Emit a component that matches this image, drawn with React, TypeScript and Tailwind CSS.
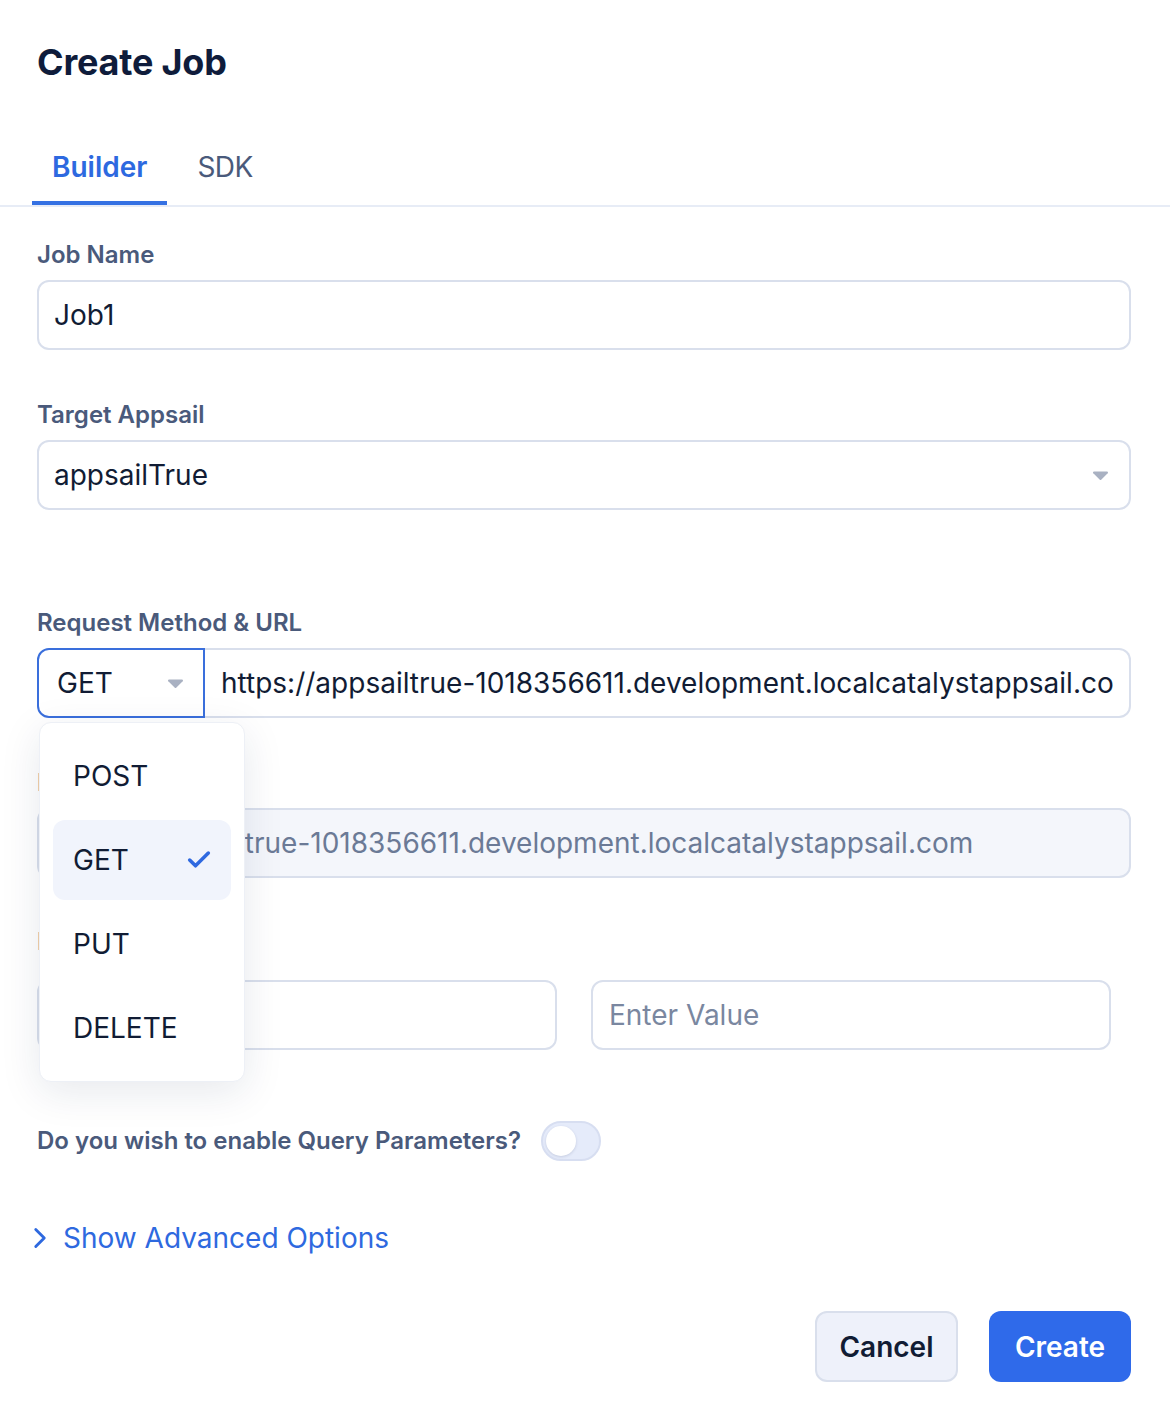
import React from "react";
import { Check, ChevronRight } from "lucide-react";

const font = { fontFamily: "Inter, 'Noto Sans', sans-serif" };

const Caret = () => (
    <svg width="17" height="11" viewBox="0 0 17 11" className="shrink-0">
        <path d="M2 1.5h13c.9 0 1.3 1 .7 1.7l-6.5 6.6c-.4.4-1 .4-1.4 0L1.3 3.2C.7 2.5 1.1 1.5 2 1.5z" fill="#a9b1c2" />
    </svg>
);

const Label = ({ children }: { children: React.ReactNode }) => (
    <div className="text-[24px] leading-[28px] font-semibold text-[#4a5a7b]">{children}</div>
);

const methods = ["POST", "GET", "PUT", "DELETE"];

export default function App() {
    return (
        <div style={font} className="w-[1170px] min-h-[1416px] bg-white text-[#111c34]">
            <div className="pl-[37px] pt-[40px]">
                <h1 className="text-[36px] leading-[44px] font-bold text-[#0f1c3b] tracking-[-0.2px]">Create Job</h1>
            </div>

            <nav className="mt-[66px] flex gap-[10px] pl-[32px] border-b-2 border-[#e7ecf6]">
                <div className="flex flex-col px-[20px]">
                    <span className="text-[28px] leading-[34px] font-semibold text-[#2d69e0]">Builder</span>
                    <div className="mt-[17px] h-[4px] bg-[#3571e3] -mx-[20px]" />
                </div>
                <div className="flex flex-col px-[20px]">
                    <span className="text-[28px] leading-[34px] text-[#4a5a7b] tracking-[-0.5px]">SDK</span>
                    <div className="mt-[17px] h-[4px]" />
                </div>
            </nav>

            <div className="pl-[37px] pr-[39px]">
                <div className="mt-[34px]">
                    <Label>Job Name</Label>
                    <div className="mt-[11px] h-[70px] rounded-[12px] border-2 border-[#d9dfec] flex items-center px-[15px] text-[28px]">
                        Job1
                    </div>
                </div>

                <div className="mt-[51px]">
                    <Label>Target Appsail</Label>
                    <div className="mt-[11px] h-[70px] rounded-[12px] border-2 border-[#d9dfec] flex items-center justify-between pl-[15px] pr-[20px] text-[28px]">
                        <span>appsailTrue</span>
                        <Caret />
                    </div>
                </div>

                <div className="mt-[99px]">
                    <Label>Request Method &amp; URL</Label>
                    <div className="relative mt-[11px] flex h-[70px]">
                        <div className="w-[168px] shrink-0 rounded-l-[12px] border-2 border-[#3a6fdc] flex items-center justify-between pl-[18px] pr-[19px] text-[28px]">
                            <span>GET</span>
                            <Caret />
                        </div>
                        <div className="flex-1 min-w-0 rounded-r-[12px] border-2 border-l-0 border-[#d9dfec] flex items-center pl-[16px] pr-[14px] text-[28px]">
                            <span className="block overflow-hidden whitespace-nowrap">
                                https://appsailtrue-1018356611.development.localcatalystappsail.com
                            </span>
                        </div>

                        <div className="absolute left-[2px] top-[74px] z-10 w-[206px] rounded-[12px] border border-[#edf0f6] bg-white p-[13px] shadow-[0_10px_40px_rgba(20,35,80,0.10)] flex flex-col gap-[4px]">
                            {methods.map((m) => (
                                <div
                                    key={m}
                                    className={`h-[80px] rounded-[12px] flex items-center justify-between pl-[20px] pr-[18px] text-[28px] ${m === "GET" ? "bg-[#f1f4fc]" : ""}`}
                                >
                                    <span>{m}</span>
                                    {m === "GET" && <Check size={28} strokeWidth={3} color="#2f69e0" />}
                                </div>
                            ))}
                        </div>
                    </div>
                </div>

                <div className="mt-[51px]">
                    <Label>Preview URL</Label>
                    <div className="mt-[11px] h-[70px] rounded-[12px] border-2 border-[#d9dfec] bg-[#f4f6fb] flex items-center pl-[17px] pr-[15px] text-[28px] text-[#6b7a96] whitespace-nowrap overflow-hidden">
                        https://appsailtrue-1018356611.development.localcatalystappsail.com
                    </div>
                </div>

                <div className="mt-[50px]">
                    <Label>Headers</Label>
                    <div className="mt-[24px] flex gap-[34px] pr-[20px]">
                        <div className="flex-1 h-[70px] rounded-[12px] border-2 border-[#d9dfec] flex items-center px-[16px] text-[28px] text-[#7a87a0]">
                            Enter Key
                        </div>
                        <div className="flex-1 h-[70px] rounded-[12px] border-2 border-[#d9dfec] flex items-center px-[16px] text-[28px] text-[#7a87a0]">
                            Enter Value
                        </div>
                    </div>
                </div>

                <div className="mt-[71px] flex items-center gap-[20px]">
                    <span className="text-[24px] leading-[28px] font-semibold text-[#4a5a7b]">Do you wish to enable Query Parameters?</span>
                    <div className="w-[60px] h-[40px] rounded-full bg-[#e5ebfa] border-2 border-[#d7def1] flex items-center px-[3px]">
                        <div className="w-[30px] h-[30px] rounded-full bg-white shadow-[0_1px_3px_rgba(20,35,80,0.15)]" />
                    </div>
                </div>

                <div className="mt-[60px] flex items-center gap-[6px] text-[#2e69df]">
                    <ChevronRight size={34} strokeWidth={2} className="-ml-[14px]" />
                    <span className="text-[28px] leading-[34px]">Show Advanced Options</span>
                </div>

                <div className="mt-[56px] flex justify-end gap-[31px]">
                    <button className="w-[143px] h-[71px] rounded-[12px] border-2 border-[#d9dfec] bg-[#eef1fa] text-[28px] font-semibold text-[#111c34]">
                        Cancel
                    </button>
                    <button className="w-[142px] h-[71px] rounded-[12px] bg-[#2f6aea] text-[28px] font-semibold text-white">
                        Create
                    </button>
                </div>
            </div>
        </div>
    );
}
